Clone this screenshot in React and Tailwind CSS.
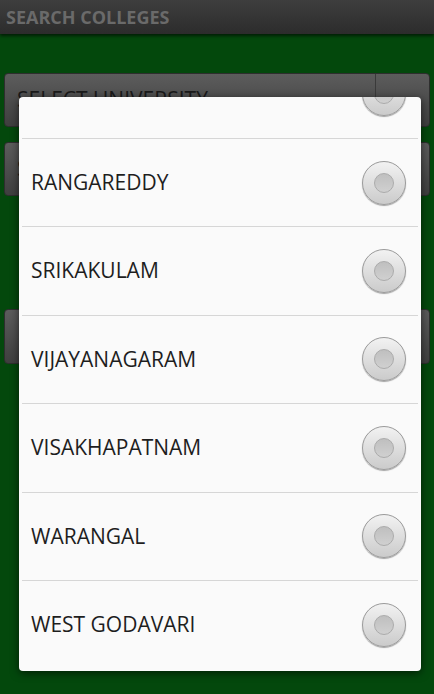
const districts = ['RANGAREDDY', 'SRIKAKULAM', 'VIJAYANAGARAM', 'VISAKHAPATNAM', 'WARANGAL', 'WEST GODAVARI'];

function Radio() {
    return (
        <div className="flex h-[44px] w-[44px] shrink-0 items-center justify-center rounded-full border border-[#9a9a9a] bg-gradient-to-b from-[#f2f2f2] to-[#cbcbcb] shadow-[0_1px_1px_rgba(0,0,0,0.35)]">
            <div className="h-[20px] w-[20px] rounded-full border border-[#ababab] bg-gradient-to-b from-[#bfbfbf] to-[#d0d0d0]" />
        </div>
    );
}

function Row({ label }) {
    return (
        <div className="flex h-[88.4px] items-center justify-between border-t border-[#d6d6d6] pl-[9px] pr-[12px]">
            <span className="text-[21px] text-[#1e1e1e]">{label}</span>
            <Radio />
        </div>
    );
}

export default function App() {
    return (
        <div className="relative h-[694px] w-[434px] overflow-hidden bg-[#03480c] font-['Open_Sans','Noto_Sans',sans-serif]">
            {/* Title bar */}
            <div className="flex h-[34px] items-center bg-gradient-to-b from-[#3e3e3e] to-[#2c2c2c] px-[6px] shadow-[0_2px_3px_rgba(0,0,0,0.6)]">
                <span className="text-[18px] font-bold text-[#6a6a6a]">SEARCH COLLEGES</span>
            </div>

            {/* Form behind the dialog */}
            <div className="flex flex-col px-[4px] pt-[39px]">
                <div className="flex h-[54px] rounded-[4px] border border-[#2e2e2e] bg-gradient-to-b from-[#5c5c5c] to-[#3f3f3f]">
                    <div className="flex flex-1 items-center pl-[12px] text-[21px] text-[#1a1a1a]">SELECT UNIVERSITY</div>
                    <div className="flex w-[54px] items-center justify-center border-l border-[#3a3a3a]">
                        <div className="mt-[10px] h-[14px] w-[28px] bg-[#333]" />
                    </div>
                </div>
                <div className="mt-[15px] flex h-[54px] rounded-[4px] border border-[#2e2e2e] bg-gradient-to-b from-[#5c5c5c] to-[#3f3f3f]">
                    <div className="flex flex-1 items-center pl-[12px] text-[21px] text-[#1a1a1a]">SELECT DISTRICT</div>
                </div>
                <div className="mt-[113px] h-[55px] rounded-[4px] border border-[#2e2e2e] bg-gradient-to-b from-[#5c5c5c] to-[#3f3f3f]" />
            </div>

            {/* Dialog */}
            <div className="absolute left-[19px] top-[97px] h-[574px] w-[402px] overflow-hidden rounded-[4px] bg-[#fafafa] shadow-[0_2px_8px_rgba(0,0,0,0.6)]">
                <div className="mx-[3px] mt-[-48px]">
                    <div className="flex h-[89px] items-center justify-end pr-[12px]">
                        <Radio />
                    </div>
                    {districts.map((d) => (
                        <Row key={d} label={d} />
                    ))}
                </div>
            </div>
        </div>
    );
}
